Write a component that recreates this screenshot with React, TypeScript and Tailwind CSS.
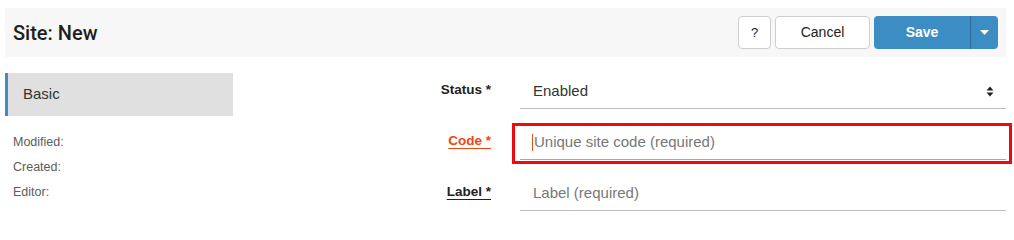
import React from "react"

const font = { fontFamily: '"Liberation Sans", Arial, sans-serif' }
const titleFont = { fontFamily: 'Roboto, "Liberation Sans", sans-serif' }

interface FieldProps {
  label: string
  tone: "plain" | "error" | "link"
  boxed?: boolean
  children: React.ReactNode
}

function Field({ label, tone, boxed, children }: FieldProps) {
  const labelCls =
    tone === "error"
      ? "text-[#f0470f] underline underline-offset-[3px]"
      : tone === "link"
        ? "text-[#222] underline underline-offset-[3px]"
        : "text-[#222]"

  return (
    <div className="flex items-start">
      <div className="w-[258px] h-[37px] flex items-center justify-end shrink-0">
        <span className={`text-[13.5px] font-bold ${labelCls}`}>{label}</span>
      </div>
      <div
        className={`ml-[21px] w-[500px] shrink-0 border-[3px] pl-[5px] pr-[3px] pb-[1px] ${
          boxed ? "border-[#ee0b0b]" : "border-transparent"
        }`}
      >
        {children}
      </div>
    </div>
  )
}

function UpDown() {
  return (
    <svg width="8" height="11" viewBox="0 0 8 11" className="text-[#222]">
      <path d="M4 0.5 L7.5 4.5 H0.5 Z" fill="currentColor" />
      <path d="M4 10.5 L7.5 6.5 H0.5 Z" fill="currentColor" />
    </svg>
  )
}

export default function App() {
  return (
    <div className="w-[1014px] h-[223px] bg-white pl-[5px] pt-[8px] overflow-hidden" style={font}>
      {/* header */}
      <div className="w-[1001px] h-[49px] bg-[#f7f7f7] flex items-center justify-between pl-[8px] pr-[8px]">
        <h1 className="text-[20px] font-medium text-[#1e1e1e]" style={titleFont}>
          Site: New
        </h1>
        <div className="flex gap-[4px]">
          <button className="w-[33px] h-[33px] rounded-[4px] border border-[#cfcfcf] bg-white text-[13px] text-[#222]">
            ?
          </button>
          <button className="w-[95px] h-[33px] rounded-[4px] border border-[#cfcfcf] bg-white text-[14px] text-[#222]">
            Cancel
          </button>
          <div className="flex h-[33px]">
            <button className="w-[96px] h-full rounded-l-[4px] bg-[#3d8dc5] text-white text-[14px] font-bold">
              Save
            </button>
            <button className="w-[28px] h-full rounded-r-[4px] bg-[#3d8dc5] border-l border-[#2b6e9d] flex items-center justify-center">
              <svg width="9" height="5" viewBox="0 0 9 5">
                <path d="M0 0 H9 L4.5 5 Z" fill="#fff" />
              </svg>
            </button>
          </div>
        </div>
      </div>

      {/* body */}
      <div className="flex mt-[15px]">
        <div className="w-[228px] shrink-0">
          <div className="mt-[1px] h-[43px] bg-[#e0e0e0] border-l-[3px] border-[#3d8dc5] pl-[15px] flex items-center text-[15px] text-[#333]">
            Basic
          </div>
          <div className="mt-[14px] pl-[8px] text-[12.5px] leading-[25px] text-[#5c5c5c]">
            <div>Modified:</div>
            <div>Created:</div>
            <div>Editor:</div>
          </div>
        </div>

        <div className="flex flex-col gap-[10px]">
          <Field label="Status *" tone="plain">
            <div className="h-[34px] border-b border-[#bdbdbd] pl-[13px] pr-[12px] flex items-center justify-between text-[15px] text-[#333]">
              <span>Enabled</span>
              <UpDown />
            </div>
          </Field>
          <Field label="Code *" tone="error" boxed>
            <div className="h-[34px] border-b border-[#7db5ea] pl-[12px] flex items-center text-[15px] text-[#777]">
              <span className="w-px h-[17px] bg-[#e2501a] mr-px" />
              <span>Unique site code (required)</span>
            </div>
          </Field>
          <Field label="Label *" tone="link">
            <div className="h-[34px] border-b border-[#bdbdbd] pl-[13px] flex items-center text-[15px] text-[#777]">
              Label (required)
            </div>
          </Field>
        </div>
      </div>
    </div>
  )
}
